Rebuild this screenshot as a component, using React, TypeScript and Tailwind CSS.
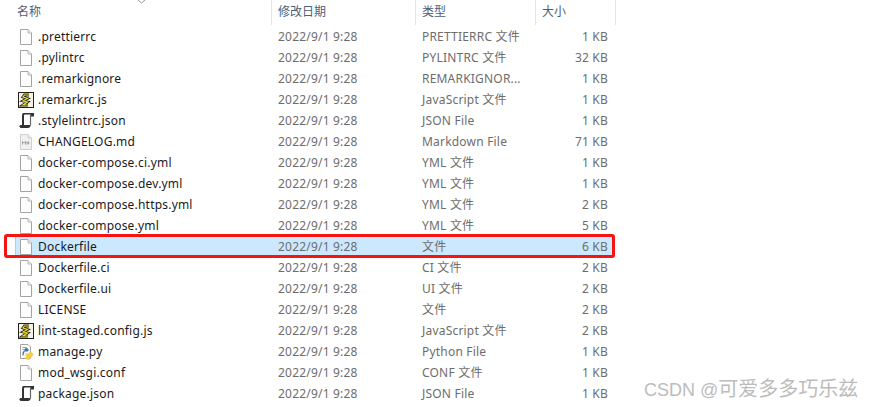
const font = { fontFamily: '"Noto Sans", "Noto Sans CJK SC", sans-serif' };

type Kind = "doc" | "js" | "json" | "md" | "py";
const rows: [string, string, string, Kind][] = [
  [".prettierrc", "PRETTIERRC 文件", "1 KB", "doc"],
  [".pylintrc", "PYLINTRC 文件", "32 KB", "doc"],
  [".remarkignore", "REMARKIGNOR...", "1 KB", "doc"],
  [".remarkrc.js", "JavaScript 文件", "1 KB", "js"],
  [".stylelintrc.json", "JSON File", "1 KB", "json"],
  ["CHANGELOG.md", "Markdown File", "71 KB", "md"],
  ["docker-compose.ci.yml", "YML 文件", "1 KB", "doc"],
  ["docker-compose.dev.yml", "YML 文件", "1 KB", "doc"],
  ["docker-compose.https.yml", "YML 文件", "2 KB", "doc"],
  ["docker-compose.yml", "YML 文件", "5 KB", "doc"],
  ["Dockerfile", "文件", "6 KB", "doc"],
  ["Dockerfile.ci", "CI 文件", "2 KB", "doc"],
  ["Dockerfile.ui", "UI 文件", "2 KB", "doc"],
  ["LICENSE", "文件", "2 KB", "doc"],
  ["lint-staged.config.js", "JavaScript 文件", "2 KB", "js"],
  ["manage.py", "Python File", "1 KB", "py"],
  ["mod_wsgi.conf", "CONF 文件", "1 KB", "doc"],
  ["package.json", "JSON File", "1 KB", "json"],
];

function Sheet({ children }: { children?: React.ReactNode }) {
  return (
    <svg width="16" height="16" viewBox="0 0 16 16" className="shrink-0">
      <path d="M2.5 .5H10L13.5 4V15.5H2.5Z" fill="#fdfdfd" stroke="#a3a3a3" />
      <path d="M10 .5V4H13.5" fill="#f0f0f0" stroke="#b5b5b5" />
      {children}
    </svg>
  );
}

function FileIcon({ kind }: { kind: Kind }) {
  if (kind === "doc") return <Sheet />;
  if (kind === "md")
    return (
      <svg width="16" height="16" viewBox="0 0 16 16" className="shrink-0">
        <path d="M2.5 .5H10L13.5 4V15.5H2.5Z" fill="#f1f1f1" stroke="#cfcfcf" />
        <path d="M10 .5V4H13.5" fill="#e4e4e4" stroke="#d0d0d0" />
        <path d="M4.5 10.5V7.5L6 9L7.5 7.5V10.5M9 7.5V10.5M9 9H11.5M10.5 7.5V10.5" fill="none" stroke="#9c9c9c" strokeWidth="0.9" />
      </svg>
    );
  if (kind === "js")
    return (
      <svg width="16" height="16" viewBox="0 0 16 16" className="shrink-0">
        <rect x=".5" y=".5" width="15" height="15" fill="#f4f2e4" stroke="#222" />
        <path d="M11 3H6.5L5 5L9.5 6.5L5 9L9.5 10L5 13H10" fill="none" stroke="#222" strokeWidth="2.8" />
        <path d="M11 3H6.5L5 5L9.5 6.5L5 9L9.5 10L5 13H10" fill="none" stroke="#f0e21e" strokeWidth="1.2" />
      </svg>
    );
  if (kind === "json")
    return (
      <svg width="16" height="16" viewBox="0 0 16 16" className="shrink-0">
        <path d="M5 12V2.5C5 1 6 .5 7 .5H15V2.5H12.5" fill="none" stroke="#333" strokeWidth="2" />
        <path d="M12.5 2V12.5" fill="none" stroke="#666" strokeWidth="1.2" />
        <path d="M2.5 12.5H12V13C12 14 11 14.5 10 14.5H3C1.5 14.5 1.5 12.5 2.5 12.5Z" fill="#333" stroke="#333" />
      </svg>
    );
  return (
    <svg width="16" height="16" viewBox="0 0 16 16" className="shrink-0">
      <path d="M2.5 .5H10L12.5 3V14.5H2.5Z" fill="#fdfdfd" stroke="#a3a3a3" />
      <path d="M4.5 3.5H8.5M4.5 5.5H7" stroke="#8a9ab0" />
      <path d="M5 11.5V8.5C5 7.5 6 7 7 7H10V5.5C10 4 7 4 7 5.5V6.5" fill="#3f77ab" stroke="#3f77ab" />
      <path d="M7 9.5H11.5V8C13.5 8 15 9 15 10.5C15 12 14 13 12 13V14.5C12 16 8 16 8 14.5V11.5C8 10.5 9 10 11 10" fill="#f5cf47" stroke="#f5cf47" strokeWidth="0.6" />
    </svg>
  );
}

const rowCols = "grid grid-cols-[272px_144px_119px_80px] w-[615px] h-[21px] items-center text-[12px] leading-[21px] tracking-[0.2px]";

export default function App() {
  return (
    <div className="relative w-[871px] h-[407px] overflow-hidden bg-white" style={font}>
      <div className="grid grid-cols-[272px_144px_120px_80px] w-[616px] h-[25px] text-[12px] text-[#4c607a] leading-[24px]">
        <div className="relative border-r border-[#e5e5e5] pl-[17px]">
          名称
          <svg width="9" height="4" viewBox="0 0 9 4" className="absolute left-[137px] top-0">
            <path d="M1 0L4.5 3L8 0" fill="none" stroke="#9a9a9a" />
          </svg>
        </div>
        <div className="border-r border-[#e5e5e5] pl-[6px]">修改日期</div>
        <div className="border-r border-[#e5e5e5] pl-[6px]">类型</div>
        <div className="border-r border-[#e5e5e5] pl-[6px]">大小</div>
      </div>
      <div className="pt-px">
        {rows.map(([name, type, size, kind]) => {
          const active = name === "Dockerfile";
          return (
            <div key={name} className={`relative ${rowCols}`}>
              {active && (
                <div className="absolute left-[15px] right-0 top-0 bottom-0 bg-[#cce8ff] border border-[#99d1ff]" />
              )}
              {active && (
                <div className="absolute left-[4px] right-0 -top-[2px] -bottom-[1px] rounded-[3px] border-[3px] border-[#f5140f] z-10" />
              )}
              <div className="relative flex items-center pl-[18px] gap-[4px] text-[#1a1a1a] min-w-0 whitespace-nowrap">
                <FileIcon kind={kind} />
                <span>{name}</span>
              </div>
              <div className="relative pl-[6px] text-[#6d6d6d] whitespace-nowrap">2022/9/1 9:28</div>
              <div className="relative pl-[6px] text-[#6d6d6d] whitespace-nowrap">{type}</div>
              <div className="relative pr-[7px] text-right text-[#6d6d6d] whitespace-nowrap">{size}</div>
            </div>
          );
        })}
      </div>
      <div className="absolute left-[644px] top-[377px] text-[18px] leading-[24px] text-[#bcbcbc] whitespace-nowrap" style={{ fontFamily: '"Liberation Sans", "Noto Sans CJK SC", sans-serif' }}>
        CSDN @<span className="text-[20px]">可爱多多巧乐兹</span>
      </div>
    </div>
  );
}
